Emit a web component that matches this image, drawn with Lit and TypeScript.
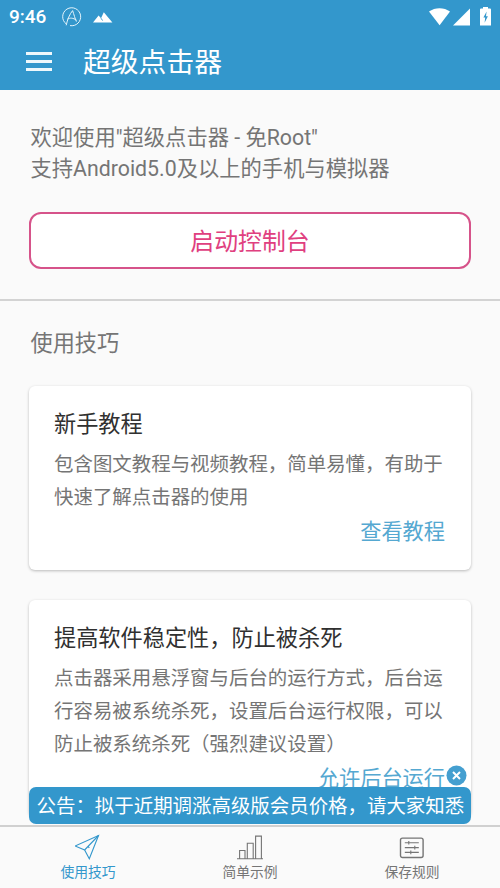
import { LitElement, html, svg, css } from "lit";
import { customElement, property, state } from "lit/decorators.js";
import { classMap } from "lit/directives/class-map.js";

interface Tip {
  title: string;
  lines: string[];
  action: string;
}

const TIPS: Tip[] = [
  {
    title: "新手教程",
    lines: ["包含图文教程与视频教程，简单易懂，有助于", "快速了解点击器的使用"],
    action: "查看教程",
  },
  {
    title: "提高软件稳定性，防止被杀死",
    lines: [
      "点击器采用悬浮窗与后台的运行方式，后台运",
      "行容易被系统杀死，设置后台运行权限，可以",
      "防止被系统杀死（强烈建议设置）",
    ],
    action: "允许后台运行",
  },
];

@customElement("status-bar")
class StatusBar extends LitElement {
  static styles = css`
    :host {
      display: flex;
      align-items: center;
      height: 34px;
      padding: 0 9px 0 9px;
      color: #fff;
    }
    .time {
      width: 53px;
      font-size: 19px;
      font-weight: 500;
      line-height: 34px;
    }
    .fill {
      flex: 1;
    }
    svg {
      display: block;
      flex: none;
    }
    .peaks {
      margin-left: 11px;
    }
    .signal {
      margin-left: 3px;
    }
    .battery {
      margin-left: 10px;
    }
  `;
  render() {
    return html`
      <span class="time">9:46</span>
      <svg width="20" height="20" viewBox="0 0 20 20" fill="none" stroke="#e4f4fb" stroke-width="1">
        <path d="M4.2 16.9A9 9 0 1 1 8 18.6" />
        <path d="M4.2 18.3C5.4 12.5 7.6 7.2 10.6 3.6C12 7.5 13 11.6 14.4 14.6M5.3 12.2C8 10.6 11 10.8 14.6 13.2" />
      </svg>
      <svg class="peaks" width="20" height="11" viewBox="0 0 20 11" fill="#fff">
        <path d="M0 10.5L5.6 3.4L8 6.2L10.8 0.2L19.4 10.5Z" />
        <path d="M8 6.2L9.6 8.6" stroke="#3397cc" stroke-width=".9" />
      </svg>
      <span class="fill"></span>
      <svg width="21" height="18" viewBox="0 0 21 18" fill="#fff">
        <path d="M0 3.6C6-1 15-1 21 3.6L10.6 17.2Z" />
      </svg>
      <svg class="signal" width="17" height="18" viewBox="0 0 17 18" fill="#fff">
        <path d="M17 0.5V17.5H0Z" />
      </svg>
      <svg class="battery" width="11" height="20" viewBox="0 0 11 20" fill="#fff">
        <path d="M3 0H8V1.5H10Q11 1.5 11 2.5V18.5H0V2.5Q0 1.5 1 1.5H3Z" />
        <path d="M6.6 4.4L3.4 10.4H5.2L4.6 15.8L7.9 9.2H6Z" fill="#3397cc" />
      </svg>
    `;
  }
}

@customElement("tip-card")
class TipCard extends LitElement {
  @property({ attribute: false }) tip!: Tip;
  static styles = css`
    :host {
      display: block;
      box-sizing: border-box;
      padding: 21px 26px 20px 25px;
      border-radius: 6px;
      background: #fff;
      box-shadow: 0 1px 3px rgba(0, 0, 0, 0.26);
      white-space: nowrap;
    }
    .title {
      font-size: 22.2px;
      line-height: 34px;
      color: #303030;
    }
    .body {
      margin-top: 7px;
      font-size: 19.45px;
      line-height: 33px;
      color: #757575;
    }
    .action {
      font-size: 21.2px;
      line-height: 36px;
      text-align: right;
      color: #55a8d1;
    }
  `;
  render() {
    return html`
      <div class="title">${this.tip.title}</div>
      <div class="body">${this.tip.lines.map((l) => html`<div>${l}</div>`)}</div>
      <div class="action">${this.tip.action}</div>
    `;
  }
}

const TABS = [
  {
    label: "使用技巧",
    icon: svg`
      <path d="M0 12L23.5 1.5L14.3 24.8L9.6 16Z" />
      <path d="M23.5 1.5L9.6 16M13 12.3L14.3 13.9" />`,
  },
  {
    label: "简单示例",
    icon: svg`
      <path d="M0 24.8H26M2.6 24.5V16.5H8V24.5M10.3 24.5V9.3H16.2V24.5M18.6 24.5V2.1H24.4V24.5" />`,
  },
  {
    label: "保存规则",
    icon: svg`
      <rect x="1.5" y="4.1" width="22.6" height="19.4" rx="2" stroke-width="1.4" />
      <path d="M5.8 8.8H19.8M5.8 13.6H19.8M5.8 18.4H19.8M9.8 7V10.6M15.8 11.8V15.4M11.8 16.6V20.2" />`,
  },
];

@customElement("app-root")
class AppRoot extends LitElement {
  @state() private active = 0;
  @state() private noticeOpen = true;

  static styles = css`
    :host {
      display: flex;
      flex-direction: column;
      position: relative;
      box-sizing: border-box;
      width: 100%;
      height: 100vh;
      overflow: hidden;
      background: #fafafa;
      font-family: Roboto, "Noto Sans CJK SC", sans-serif;
      color: #757575;
      white-space: nowrap;
    }
    header {
      flex: none;
      height: 90px;
      background: #3397cc;
    }
    .appbar {
      display: flex;
      align-items: center;
      height: 56px;
      padding-left: 26px;
    }
    .menu {
      display: flex;
      flex-direction: column;
      gap: 5px;
      width: 26px;
      padding-bottom: 1px;
    }
    .menu i {
      height: 3px;
      background: #eef8fc;
    }
    .name {
      margin-left: 31px;
      font-size: 27.8px;
      line-height: 58px;
      padding-top: 2px;
      color: #fff;
    }
    main {
      flex: 1;
      min-height: 0;
      overflow: hidden;
    }
    .intro {
      box-sizing: border-box;
      height: 211px;
      padding: 32px 29px 0;
      border-bottom: 2px solid #d3d3d3;
    }
    .welcome {
      padding-left: 1.5px;
      font-size: 21.3px;
      line-height: 31px;
    }
    .start {
      display: block;
      box-sizing: border-box;
      width: 100%;
      height: 57px;
      margin-top: 28px;
      padding: 1px 0 0;
      border: 2px solid #d6538a;
      border-radius: 12px;
      background: #fff;
      font: 23.9px/54px Roboto, "Noto Sans CJK SC", sans-serif;
      color: #e0407f;
    }
    .tips {
      display: flex;
      flex-direction: column;
      gap: 30px;
      padding: 25px 29px 0;
    }
    .heading {
      padding-left: 1.5px;
      margin-bottom: -4px;
      font-size: 22.2px;
      line-height: 34px;
    }
    .notice {
      position: absolute;
      left: 29px;
      right: 29px;
      bottom: 64px;
      height: 37px;
      box-sizing: border-box;
      padding-left: 7.5px;
      border-radius: 7px;
      background: #3397cc;
      font-size: 19.45px;
      line-height: 39px;
      color: #fff;
    }
    .close {
      position: absolute;
      right: 4px;
      top: -22px;
      display: block;
    }
    nav {
      display: grid;
      grid-template-columns: 176px 148px 176px;
      flex: none;
      height: 63px;
      box-sizing: border-box;
      border-top: 2px solid #d0d0d0;
    }
    .tab {
      display: flex;
      flex-direction: column;
      align-items: center;
      padding-top: 7px;
      font-size: 13.8px;
      line-height: 22px;
    }
    .tab svg {
      display: block;
      width: 26px;
      height: 26px;
      margin-bottom: 1px;
      fill: none;
      stroke: currentColor;
      stroke-width: 1.1;
    }
    .on {
      color: #3397cc;
    }
  `;

  render() {
    return html`
      <header>
        <status-bar></status-bar>
        <div class="appbar">
          <div class="menu"><i></i><i></i><i></i></div>
          <div class="name">超级点击器</div>
        </div>
      </header>
      <main>
        <section class="intro">
          <div class="welcome">
            <div>欢迎使用"超级点击器 - 免Root"</div>
            <div>支持Android5.0及以上的手机与模拟器</div>
          </div>
          <button class="start">启动控制台</button>
        </section>
        <section class="tips">
          <div class="heading">使用技巧</div>
          ${TIPS.map((t) => html`<tip-card .tip=${t}></tip-card>`)}
        </section>
      </main>
      ${this.noticeOpen
        ? html`<div class="notice">
            公告：拟于近期调涨高级版会员价格，请大家知悉
            <svg class="close" width="21" height="21" viewBox="0 0 21 21" @click=${() => (this.noticeOpen = false)}>
              <circle cx="10.5" cy="10.5" r="10" fill="#449fd0" />
              <path d="M7 7L14 14M14 7L7 14" stroke="#fff" stroke-width="2" />
            </svg>
          </div>`
        : null}
      <nav>
        ${TABS.map(
          (t, i) => html`<div class=${classMap({ tab: true, on: i === this.active })} @click=${() => (this.active = i)}>
            <svg viewBox="0 0 26 26">${t.icon}</svg>
            <span>${t.label}</span>
          </div>`
        )}
      </nav>
    `;
  }
}
